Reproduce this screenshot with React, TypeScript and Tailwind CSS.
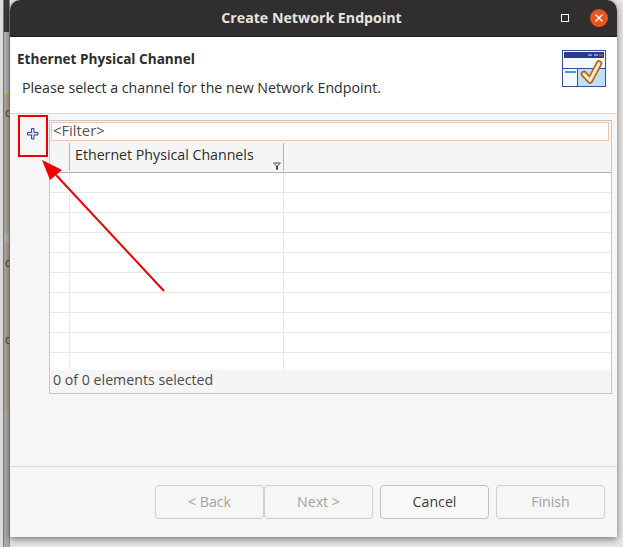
const rows = [0, 1, 2, 3, 4, 5, 6, 7, 8, 9];

function Btn({ label, disabled }: { label: string; disabled?: boolean }) {
  return (
    <button
      className={
        disabled
          ? "w-[109px] h-[34px] rounded-[4px] border border-[#cfcdca] bg-[#f6f6f6] text-[#a5a3a0] text-[14.2px]"
          : "w-[109px] h-[34px] rounded-[4px] border border-[#c4c2bf] bg-[#f8f8f8] text-[#3d3d3d] text-[14.2px]"
      }
    >
      {label}
    </button>
  );
}

function WizardIcon() {
  return (
    <svg width="44" height="38" viewBox="0 0 44 38">
      <rect x="0.5" y="0.5" width="43" height="36" fill="#f4f8fd" stroke="#3b4f96" />
      <rect x="2" y="2" width="40" height="6" fill="#2b3a8f" />
      <rect x="26" y="4" width="4" height="2" fill="#6f93d8" />
      <rect x="32" y="4" width="4" height="2" fill="#6f93d8" />
      <rect x="37" y="4" width="4" height="2" fill="#c8402f" />
      <rect x="16" y="18" width="27" height="18" fill="#bfe0f7" />
      <path d="M1 18.500H43M15.500 19V36" stroke="#3b4f96" fill="none" />
      <rect x="3" y="21" width="11" height="2" fill="#3d9be0" />
      <path d="M22 24l6 6.500 9-17" fill="none" stroke="#a8701c" strokeWidth="6.500" strokeLinecap="round" strokeLinejoin="round" />
      <path d="M22 24l6 6.500 9-17" fill="none" stroke="#fde9c8" strokeWidth="3" strokeLinecap="round" strokeLinejoin="round" />
    </svg>
  );
}

function DesktopStrip() {
  return (
    <div className="w-[10px] h-[547px] shrink-0 flex bg-[#dcdcdc]">
      <div className="w-[3px] shrink-0" />
      <div className="w-[7px] flex flex-col overflow-hidden border-l border-[#777] border-r border-r-[#8a8a8a] text-[13px] leading-[16px] text-[#444] font-['Liberation_Sans',sans-serif]">
        <div className="h-[32px] shrink-0 bg-[#3a3838]" />
        <div className="h-[63px] shrink-0 bg-[#b2b2b2] border-b border-[#c9a24f]" />
        <div className="h-[138px] shrink-0 bg-[#aca498] pt-[10px] pl-[1px]">c</div>
        <div className="h-[11px] shrink-0 bg-[#b2b2b2] border-b border-[#c9a24f]" />
        <div className="h-[165px] shrink-0 bg-[#aca498] pl-[1px]">
          <div className="pt-[11px]">c</div>
          <div className="pt-[61px]">c</div>
        </div>
        <div className="flex-1 bg-[#aaaaaa] border-t border-[#c9a24f]" />
      </div>
    </div>
  );
}

export default function App() {
  return (
    <div className="relative w-[623px] h-[547px] overflow-hidden bg-[#e6e5e4] font-['Open_Sans',sans-serif]">
      <div className="flex">
        <DesktopStrip />
        <div className="w-[607px] h-[537px] shrink-0 flex flex-col rounded-t-[10px] overflow-hidden bg-[#f6f6f6] shadow-[0_2px_7px_rgba(0,0,0,0.5)]">
          <div className="relative h-[37px] shrink-0 flex items-center justify-center bg-[#302e2e] border-b border-[#1f1e1e]">
            <span className="pr-[4px] text-[14.2px] font-bold text-[#e6e4e1]">Create Network Endpoint</span>
            <div className="absolute right-[48px] top-[14px] w-2 h-2 border border-white" />
            <div className="absolute right-[9px] top-[9px] w-[18px] h-[18px] rounded-full bg-[#e95420] flex items-center justify-center">
              <svg width="10" height="10" viewBox="0 0 10 10">
                <path d="M1.500 1.500l7 7M8.500 1.500l-7 7" stroke="#fff" strokeWidth="1.400" />
              </svg>
            </div>
          </div>

          <div className="h-[77px] shrink-0 flex justify-between bg-white border-b border-[#dcdad8]">
            <div className="pl-[7px] pt-[12px]">
              <div className="text-[13.6px] leading-[20px] font-bold text-[#2d2d2d]">Ethernet Physical Channel</div>
              <div className="pl-[5px] pt-[9px] text-[14.2px] leading-[20px] text-[#2d2d2d]">
                Please select a channel for the new Network Endpoint.
              </div>
            </div>
            <div className="pt-[13px] pr-[11px]">
              <WizardIcon />
            </div>
          </div>

          <div className="h-[353px] shrink-0 flex pt-[6px] pl-[8px] border-b border-[#dcdad8]">
            <div className="w-[31px] shrink-0 pt-[7px] pl-[8px]">
              <svg width="14" height="14" viewBox="0 0 14 14">
                <path d="M5.500 1.500h2.500v4h4v2.500H8v4H5.500V8H1.500V5.500H5.500z" fill="#cfe3f8" stroke="#2f4a94" />
              </svg>
            </div>
            <div className="w-[563px] h-[274px] flex flex-col border border-[#c9c7c5]">
              <div className="h-[21px] shrink-0 p-px">
                <div className="h-[19px] mr-px border border-[#f0c4b4] bg-white pl-[1px] text-[14.800px] leading-[15px] text-[#555]">
                  &lt;Filter&gt;
                </div>
              </div>
              <div className="h-[31px] shrink-0 flex border-b border-[#b5b3b1] bg-[#f5f5f5]">
                <div className="w-[20px] shrink-0 border-r border-[#b5b3b1] my-[1px]" />
                <div className="relative w-[214px] shrink-0 border-r border-[#b5b3b1] my-[1px] pl-[5px] text-[14.2px] leading-[24px] text-[#2d2d2d]">
                  Ethernet Physical Channels
                  <svg className="absolute right-[2px] bottom-[1px]" width="8" height="8" viewBox="0 0 8 8">
                    <path d="M.5 1h7M1 1.500l2.500 2.500V7.500h1V4L7 1.500" fill="none" stroke="#444" />
                  </svg>
                </div>
              </div>
              <div className="flex-1 bg-white overflow-hidden">
                {rows.map((r) => (
                  <div key={r} className="h-[20px] flex border-b border-[#e9e8e7]">
                    <div className="w-[20px] shrink-0 border-r border-[#e9e8e7]" />
                    <div className="w-[214px] shrink-0 border-r border-[#e9e8e7]" />
                  </div>
                ))}
              </div>
              <div className="h-[23px] shrink-0 bg-[#f5f5f5] pl-[3px] text-[14.2px] leading-[19px] text-[#4a4a4a]">
                0 of 0 elements selected
              </div>
            </div>
          </div>

          <div className="flex-1 flex pt-[18px] pl-[145px]">
            <Btn label="< Back" disabled />
            <Btn label="Next >" disabled />
            <div className="w-[7px]" />
            <Btn label="Cancel" />
            <div className="w-[7px]" />
            <Btn label="Finish" disabled />
          </div>
        </div>
      </div>

      <div className="absolute left-[18px] top-[115px] w-[30px] h-[42px] border-2 border-[#f00000]" />
      <svg className="absolute left-0 top-0" width="623" height="547" viewBox="0 0 623 547">
        <path d="M164 291L56 175" stroke="#f00000" strokeWidth="2" />
        <path d="M42 160L62 170L50 180Z" fill="#f00000" />
      </svg>
    </div>
  );
}
